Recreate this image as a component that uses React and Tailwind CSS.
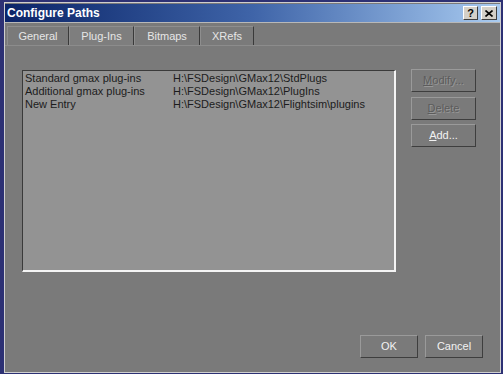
import React from "react";

const tabs = ["General", "Plug-Ins", "Bitmaps", "XRefs"];
const tabWidths = ["w-[62px]", "w-[65px]", "w-[66px]", "w-[54px]"];

const entries = [
    { name: "Standard gmax plug-ins", path: "H:\\FSDesign\\GMax12\\StdPlugs" },
    { name: "Additional gmax plug-ins", path: "H:\\FSDesign\\GMax12\\PlugIns" },
    { name: "New Entry", path: "H:\\FSDesign\\GMax12\\Flightsim\\plugins" },
];

function Btn({ children, disabled, className = "" }) {
    return (
        <button
            type="button"
            className={`flex items-center justify-center h-[23px] border border-t-[#9a9a9a] border-l-[#9a9a9a] border-b-[#3e3e3e] border-r-[#3e3e3e] bg-[#7a7a7a] text-[11px] ${disabled ? "text-[#5c5c5c] [text-shadow:1px_1px_0_#989898]" : "text-[#f2f2f2]"} ${className}`}
        >
            {children}
        </button>
    );
}

export default function App() {
    return (
        <div
            className="w-[503px] h-[374px] bg-[#2d3174] pl-[4px] pt-[2px] pr-[2px] pb-[1px] overflow-hidden"
            style={{ fontFamily: '"Liberation Sans", Arial, sans-serif' }}
        >
            <div className="w-full h-full border border-[#cfcfcf] bg-[#7a7a7a] flex flex-col">
                {/* title bar */}
                <div className="h-[19px] mt-[1px] flex items-center justify-between pl-[2px] pr-[3px] bg-gradient-to-r from-[#0c2468] via-[#3f64a8] to-[#a9cbf0] border-b border-[#b8b8b8]">
                    <span className="text-white font-bold text-[12px] leading-none">Configure Paths</span>
                    <div className="flex gap-[3px]">
                        <div className="w-[15px] h-[14px] bg-[#d4d0c8] border border-t-white border-l-white border-b-[#404040] border-r-[#404040] flex items-center justify-center text-black font-bold text-[11px] leading-none">?</div>
                        <div className="w-[16px] h-[14px] bg-[#d4d0c8] border border-t-white border-l-white border-b-[#404040] border-r-[#404040] flex items-center justify-center">
                            <svg width="8" height="7" viewBox="0 0 8 7">
                                <path d="M0.5 0.5 L7.5 6.5 M7.5 0.5 L0.5 6.5" stroke="#000" strokeWidth="1.6" />
                            </svg>
                        </div>
                    </div>
                </div>

                {/* tabs */}
                <div className="mt-[3px] flex pl-[2px] h-[20px] border-b border-[#8c8c8c]">
                    {tabs.map((t, i) => (
                        <div
                            key={t}
                            className={`${tabWidths[i]} h-full flex items-center justify-center border-l border-t border-r border-l-[#8e8e8e] border-t-[#8e8e8e] border-r-[#3a3a3a] text-[11px] text-[#e6e6e6] ${i === 1 ? "bg-[#7e7e7e]" : ""}`}
                        >
                            {t}
                        </div>
                    ))}
                </div>

                {/* panel */}
                <div className="flex pl-[17px] pt-[24px]">
                    <div className="w-[374px] h-[202px] bg-[#939393] border border-t-[#3a3a3a] border-l-[#3a3a3a] border-b-[#f4f4f4] border-r-[#f4f4f4] border-b-2 border-r-2 pt-[1px] pl-[2px] text-[11px] text-[#1c1c1c]">
                        {entries.map((e) => (
                            <div key={e.name} className="flex h-[13px] leading-[13px]">
                                <span className="w-[148px]">{e.name}</span>
                                <span>{e.path}</span>
                            </div>
                        ))}
                    </div>
                    <div className="ml-[15px] -mt-[1px] w-[65px] flex flex-col">
                        <Btn disabled>
                            <span><span className="underline">M</span>odify...</span>
                        </Btn>
                        <Btn disabled className="mt-[5px]">
                            <span><span className="underline">D</span>elete</span>
                        </Btn>
                        <Btn className="mt-[4px]">
                            <span><span className="underline">A</span>dd...</span>
                        </Btn>
                    </div>
                </div>

                {/* bottom buttons */}
                <div className="mt-[63px] flex justify-end gap-[7px] pr-[17px]">
                    <Btn className="w-[58px]">OK</Btn>
                    <Btn className="w-[58px]">Cancel</Btn>
                </div>
            </div>
        </div>
    );
}
